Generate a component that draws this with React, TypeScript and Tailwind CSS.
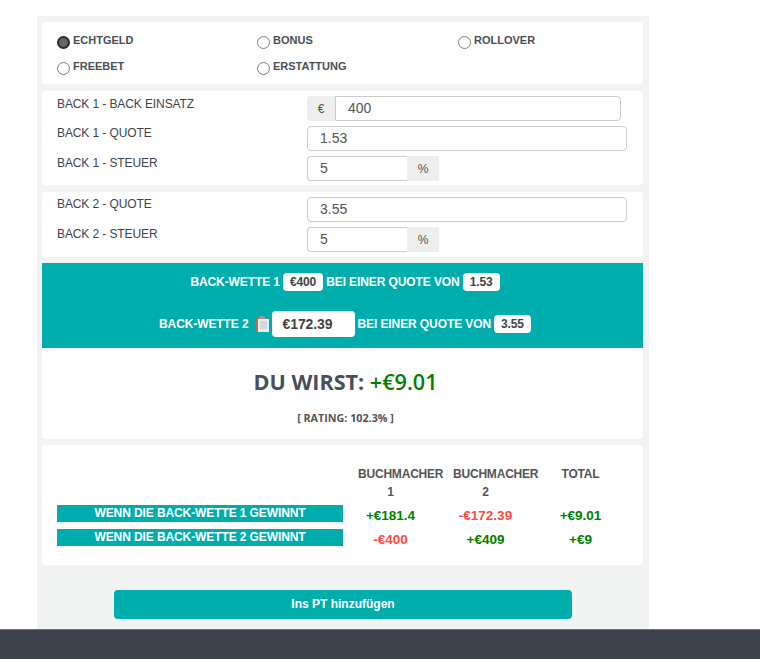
import React from 'react';

const sans = 'font-["Liberation_Sans",Arial,sans-serif]';

const ClipboardIcon = () => (
  <svg width="14" height="16" viewBox="0 0 14 16" className="ml-[6px] mr-[3px] shrink-0">
    <rect x="0" y="1.5" width="13" height="14.5" rx="1" fill="#b5703f" />
    <rect x="4" y="0" width="6" height="3" rx="0.5" fill="#8d9aa0" />
    <path d="M3 3h11v13H3z" fill="#e8ecec" />
    <path d="M5 6h7M5 8h7M5 10h7M5 12h7" stroke="#b9c2c4" strokeWidth="1" />
  </svg>
);

const Radio = ({ label, checked }: { label: string; checked?: boolean }) => (
  <label className="flex items-start h-[26px]">
    <input
      type="radio"
      name="mode"
      defaultChecked={checked}
      className={
        checked
          ? 'appearance-none w-[13px] h-[13px] mt-[7px] mr-[3px] rounded-full border-2 border-[#2b2b2b] bg-[#666666]'
          : 'appearance-none w-[13px] h-[13px] mt-[7px] mr-[3px] rounded-full border border-[#7f7f7f] bg-white'
      }
    />
    <span className="text-[11px] leading-[13px] font-bold text-[#4b4f58] mt-[5px]">{label}</span>
  </label>
);

const FieldLabel = ({ children, first }: { children: React.ReactNode; first?: boolean }) => (
  <div className={`w-[250px] shrink-0 text-[12px] leading-[14px] tracking-[-0.1px] text-[#3f444e] ${first ? 'pt-[1px]' : ''}`}>{children}</div>
);

const textInput =
  'h-[25px] border border-[#cccccc] rounded-[4px] bg-white text-[14px] text-[#555555] px-[12px] flex items-center';

const Row = ({ children }: { children: React.ReactNode }) => <div className="flex items-start h-[25px]">{children}</div>;

const PercentInput = ({ value }: { value: string }) => (
  <div className="flex h-[25px] w-[132px]">
    <div className={`${textInput} w-[100px] rounded-r-none border-r-0`}>{value}</div>
    <div className="w-[32px] bg-[#eeeeee] text-[12px] text-[#555555] flex items-center justify-center">%</div>
  </div>
);

const Chip = ({ children }: { children: React.ReactNode }) => (
  <span className="inline-flex items-center justify-center h-[18px] px-[7px] mx-[3px] bg-white rounded-[4px] text-[#444444] text-[12px] font-bold">
    {children}
  </span>
);

const TableHead = ({ children }: { children: React.ReactNode }) => (
  <div className="w-[95px] px-[15px] shrink-0 text-center text-[12px] leading-[18px] font-bold tracking-[-0.2px] text-[#555555]">{children}</div>
);

export default function App() {
  return (
    <div className={`${sans} h-[659px] bg-white flex flex-col overflow-hidden`}>
      <div className="flex-1 pt-[16px] pl-[37px]">
        <div className="w-[612px] h-[613px] bg-[#f2f4f4] pl-[5px] pr-[6px] pt-[6px] flex flex-col">
          <div className="bg-white rounded-[4px] h-[62px] pt-[7px] pl-[15px] grid grid-cols-[200px_201px_1fr] content-start">
            <Radio label="ECHTGELD" checked />
            <Radio label="BONUS" />
            <Radio label="ROLLOVER" />
            <Radio label="FREEBET" />
            <Radio label="ERSTATTUNG" />
          </div>

          <div className="mt-[7px] bg-white rounded-[4px] h-[94px] pt-[5px] pl-[15px] flex flex-col gap-[5px]">
            <Row>
              <FieldLabel first>BACK 1 - BACK EINSATZ</FieldLabel>
              <div className="flex h-[25px] w-[314px]">
                <div className="w-[28px] bg-[#eeeeee] rounded-l-[4px] text-[12px] text-[#555555] flex items-center justify-center">€</div>
                <div className={`${textInput} flex-1 rounded-l-none`}>400</div>
              </div>
            </Row>
            <Row>
              <FieldLabel>BACK 1 - QUOTE</FieldLabel>
              <div className={`${textInput} w-[320px]`}>1.53</div>
            </Row>
            <Row>
              <FieldLabel>BACK 1 - STEUER</FieldLabel>
              <PercentInput value="5" />
            </Row>
          </div>

          <div className="mt-[7px] bg-white rounded-[4px] h-[65px] pt-[5px] pl-[15px] flex flex-col gap-[5px]">
            <Row>
              <FieldLabel>BACK 2 - QUOTE</FieldLabel>
              <div className={`${textInput} w-[320px]`}>3.55</div>
            </Row>
            <Row>
              <FieldLabel>BACK 2 - STEUER</FieldLabel>
              <PercentInput value="5" />
            </Row>
          </div>

          <div className="mt-[6px] bg-[#00adad] h-[85px] pl-[8px] flex flex-col items-center text-white text-[12px] font-bold tracking-[-0.1px]">
            <div className="h-[19px] mt-[9px] flex items-center">
              BACK-WETTE 1<Chip>€400</Chip>BEI EINER QUOTE VON<Chip>1.53</Chip>
            </div>
            <div className="h-[26px] mt-[20px] flex items-center">
              BACK-WETTE 2<ClipboardIcon />
              <span className="w-[83px] h-[26px] mr-[3px] bg-white rounded-[4px] text-[#444444] text-[14px] flex items-center pl-[11px]">€172.39</span>
              BEI EINER QUOTE VON<Chip>3.55</Chip>
            </div>
          </div>

          <div className='bg-white h-[91px] pl-[6px] rounded-b-[4px] text-center font-["Open_Sans",sans-serif] font-bold'>
            <div className="pt-[19px] text-[21.6px] leading-[30px] text-[#4b4f58]">
              DU WIRST: <span className="text-[#008000] font-semibold">+€9.01</span>
            </div>
            <div className="mt-[14px] text-[10.75px] leading-[14px] text-[#555555]">[ RATING: 102.3% ]</div>
          </div>

          <div className="mt-[6px] bg-white rounded-[4px] h-[120px] pl-[15px] pt-[20px]">
            <div className="flex h-[40px] pl-[286px]">
              <TableHead>BUCHMACHER 1</TableHead>
              <TableHead>BUCHMACHER 2</TableHead>
              <TableHead>TOTAL</TableHead>
            </div>
            {[
              { label: 'WENN DIE BACK-WETTE 1 GEWINNT', a: '+€181.4', b: '-€172.39', c: '+€9.01', aUp: true, bUp: false },
              { label: 'WENN DIE BACK-WETTE 2 GEWINNT', a: '-€400', b: '+€409', c: '+€9', aUp: false, bUp: true },
            ].map((row) => (
              <div key={row.label} className="flex items-center h-[17px] mb-[7px] font-bold">
                <div className="w-[286px] h-[17px] bg-[#00adad] text-white text-[12px] tracking-[-0.1px] text-center leading-[16px]">{row.label}</div>
                <div className={`w-[95px] mt-[6px] text-[13.5px] text-center ${row.aUp ? 'text-[#008000]' : 'text-[#ff4b3e]'}`}>{row.a}</div>
                <div className={`w-[95px] mt-[6px] text-[13.5px] text-center ${row.bUp ? 'text-[#008000]' : 'text-[#ff4b3e]'}`}>{row.b}</div>
                <div className="w-[95px] mt-[6px] text-[13.5px] text-center text-[#008000]">{row.c}</div>
              </div>
            ))}
          </div>

          <button className="mt-[25px] ml-[72px] w-[458px] h-[29px] pb-[2px] bg-[#00adad] rounded-[4px] text-white text-[12px] font-bold shrink-0">
            Ins PT hinzufügen
          </button>
        </div>
      </div>
      <div className="h-[30px] bg-[#3e434e] border-t border-[#6c7079] shrink-0" />
    </div>
  );
}
